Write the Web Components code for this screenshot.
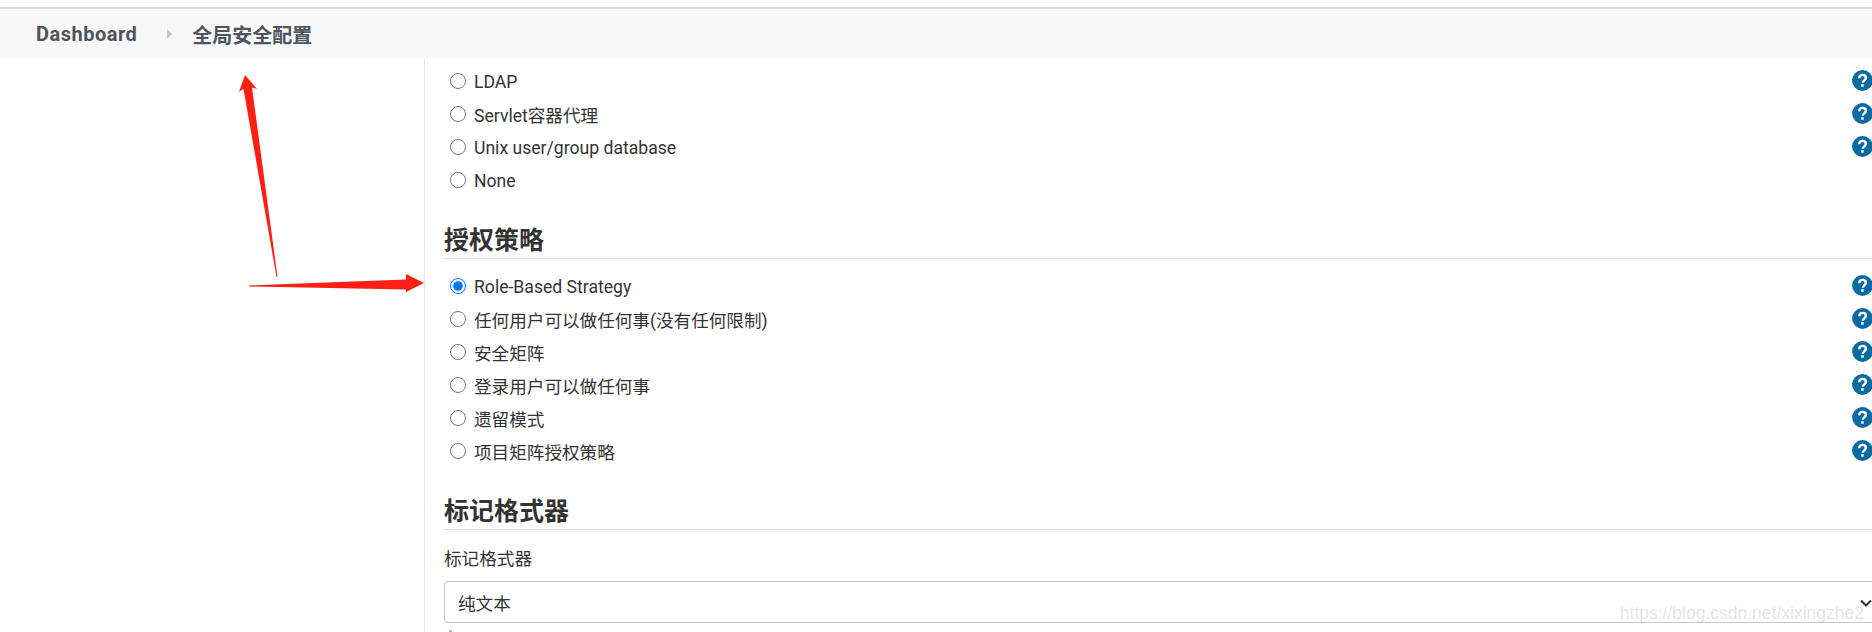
<!DOCTYPE html>
<html lang="zh">
<head>
<meta charset="utf-8">
<title>全局安全配置</title>
<style>
  html, body { margin: 0; height: 632px; overflow: hidden; background: #fff; }
  body {
    position: relative;
    font-family: Roboto, "Noto Sans CJK SC", sans-serif;
    color: #333;
  }
</style>
</head>
<body>
  <jk-breadcrumb>
    <jk-crumb>Dashboard</jk-crumb>
    <jk-crumb current>全局安全配置</jk-crumb>
  </jk-breadcrumb>

  <jk-layout>
    <jk-radio-group>
      <jk-radio>LDAP</jk-radio>
      <jk-radio>Servlet容器代理</jk-radio>
      <jk-radio>Unix user/group database</jk-radio>
      <jk-radio nohelp>None</jk-radio>
    </jk-radio-group>

    <jk-section heading="授权策略">
      <jk-radio-group>
        <jk-radio checked>Role-Based Strategy</jk-radio>
        <jk-radio>任何用户可以做任何事(没有任何限制)</jk-radio>
        <jk-radio>安全矩阵</jk-radio>
        <jk-radio>登录用户可以做任何事</jk-radio>
        <jk-radio>遗留模式</jk-radio>
        <jk-radio>项目矩阵授权策略</jk-radio>
      </jk-radio-group>
    </jk-section>

    <jk-section heading="标记格式器">
      <jk-select label="标记格式器" value="纯文本"></jk-select>
    </jk-section>
  </jk-layout>

  <jk-annotations></jk-annotations>

<script>
/***************************************** Breadcrumb *****************************************/
class JkBreadcrumb extends HTMLElement {
  constructor() {
    super();
    this.attachShadow({ mode: "open" });
    this.shadowRoot.innerHTML = `
    <style>
      :host {
        display: flex;
        align-items: center;
        height: 50px;
        margin-top: 7px;
        padding-left: 36px;
        border-top: 2px solid #dcdce0;
        background-color: #f8f8f8;
      }
    </style>
    <slot></slot>`;
  }
}
customElements.define("jk-breadcrumb", JkBreadcrumb);

class JkCrumb extends HTMLElement {
  constructor() {
    super();
    this.attachShadow({ mode: "open" });
    this.shadowRoot.innerHTML = `
    <style>
      :host {
        display: flex;
        align-items: center;
        font-size: 20px;
        font-weight: 700;
        letter-spacing: 0.5px;
        color: #4d545d;
      }
      :host([current]) { letter-spacing: 0; }
      .sep {
        width: 0;
        height: 0;
        margin: 0 20px 0 30px;
        border-left: 5px solid #c8c8cc;
        border-top: 5px solid transparent;
        border-bottom: 5px solid transparent;
      }
      :host([current]) .sep { display: none; }
    </style>
    <slot></slot><span class="sep"></span>`;
  }
}
customElements.define("jk-crumb", JkCrumb);

/***************************************** Layout *****************************************/
class JkLayout extends HTMLElement {
  constructor() {
    super();
    this.attachShadow({ mode: "open" });
    this.shadowRoot.innerHTML = `
    <style>
      :host {
        display: grid;
        grid-template-columns: 424px 1fr;
        height: 600px;
      }
      main {
        min-width: 0;
        padding: 5px 0 0 19px;
        border-left: 1px solid #e6e6e9;
      }
    </style>
    <aside></aside>
    <main><slot></slot></main>`;
  }
}
customElements.define("jk-layout", JkLayout);

class JkSection extends HTMLElement {
  constructor() {
    super();
    this.attachShadow({ mode: "open" });
    this.shadowRoot.innerHTML = `
    <style>
      :host { display: block; margin-top: 28px; }
      h2 {
        margin: 0 0 10px 0;
        height: 34px;
        line-height: 34px;
        font-size: 25px;
        font-weight: 700;
        color: #333;
        border-bottom: 1px solid #e0e0e3;
      }
    </style>
    <h2></h2>
    <slot></slot>`;
    this.shadowRoot.querySelector("h2").textContent = this.getAttribute("heading");
  }
}
customElements.define("jk-section", JkSection);

/***************************************** Radio rows *****************************************/
class JkRadioGroup extends HTMLElement {
  constructor() {
    super();
    this.attachShadow({ mode: "open" });
    this.shadowRoot.innerHTML = `
    <style>
      :host { display: flex; flex-direction: column; }
    </style>
    <slot></slot>`;
  }
}
customElements.define("jk-radio-group", JkRadioGroup);

class JkRadio extends HTMLElement {
  constructor() {
    super();
    this.attachShadow({ mode: "open" });
    this.shadowRoot.innerHTML = `
    <style>
      :host {
        display: flex;
        align-items: center;
        height: 33px;
        font-size: 17.6px;
        color: #333;
      }
      input {
        width: 16px;
        height: 16px;
        margin: 0 8px 0 6px;
      }
      label { flex: 1; padding-top: 2px; }
      svg { width: 21px; height: 21px; flex: none; margin-right: -1px; }
      :host([nohelp]) svg { visibility: hidden; }
    </style>
    <input type="radio" name="realm">
    <label><slot></slot></label>
    <svg viewBox="0 0 21 21" aria-hidden="true">
      <circle cx="10.5" cy="10.5" r="10.4" fill="#0b6aa2"/>
      <path d="M7.2 8.2c0-2 1.4-3.3 3.4-3.3 1.9 0 3.3 1.2 3.3 2.9 0 2.5-3.1 2.6-3.1 5" fill="none" stroke="#fff" stroke-width="2.4"/>
      <rect x="9.2" y="14.2" width="2.5" height="2.5" fill="#fff"/>
    </svg>`;
    if (this.hasAttribute("checked")) {
      this.shadowRoot.querySelector("input").checked = true;
    }
  }
}
customElements.define("jk-radio", JkRadio);

/***************************************** Select *****************************************/
class JkSelect extends HTMLElement {
  constructor() {
    super();
    this.attachShadow({ mode: "open" });
    this.shadowRoot.innerHTML = `
    <style>
      :host { display: block; padding-top: 1px; font-size: 17.6px; color: #333; }
      .label { height: 36px; line-height: 36px; margin-bottom: 4px; }
      .box { position: relative; }
      select {
        appearance: none;
        display: block;
        width: calc(100% + 8px);
        height: 42px;
        padding: 3px 13px 0 13px;
        font: inherit;
        color: inherit;
        background: #fff;
        border: 1px solid #c8c8c8;
        border-radius: 4px;
      }
      svg { position: absolute; right: 0; top: 18px; width: 12px; height: 8px; }
      .dot { width: 3px; height: 2px; margin: 7px 0 0 5px; background: #b4b4b4; }
    </style>
    <div class="label"></div>
    <div class="box">
      <select><option></option></select>
      <svg viewBox="0 0 12 8"><path d="M1 1.5 6 6.5 11 1.5" fill="none" stroke="#333" stroke-width="2"/></svg>
    </div>
    <div class="dot"></div>`;
    this.shadowRoot.querySelector(".label").textContent = this.getAttribute("label");
    this.shadowRoot.querySelector("option").textContent = this.getAttribute("value");
  }
}
customElements.define("jk-select", JkSelect);

/***************************************** Annotations *****************************************/
// red arrows and the watermark lie over the page
class JkAnnotations extends HTMLElement {
  constructor() {
    super();
    this.attachShadow({ mode: "open" });
    this.shadowRoot.innerHTML = `
    <style>
      :host { position: absolute; inset: 0; pointer-events: none; }
      svg { position: absolute; left: 0; top: 0; }
      .mark {
        position: absolute;
        right: 8px;
        top: 603px;
        font: 17.5px "Liberation Sans", sans-serif;
        color: rgba(170, 170, 170, 0.32);
      }
    </style>
    <svg width="1872" height="632" viewBox="0 0 1872 632">
      <polygon fill="#ff1f14" points="245,75 257,89 252,87.5 277.5,277 276.5,277 243.5,89 239,91.7"/>
      <polygon fill="#ff1f14" points="249,285.5 406,279.5 406,274 424,283 406,292 406,289.5 249,286.5"/>
    </svg>
    <div class="mark">https://blog.csdn.net/xixingzhe2</div>`;
  }
}
customElements.define("jk-annotations", JkAnnotations);
</script>
</body>
</html>
